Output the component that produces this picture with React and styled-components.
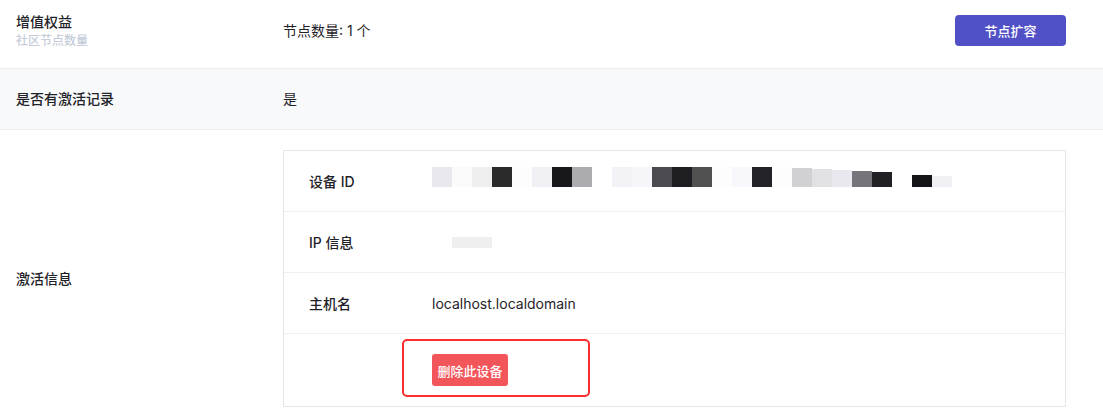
import React from "react";
import styled, { createGlobalStyle } from "styled-components";

const GlobalStyle = createGlobalStyle`
  body {
    margin: 0;
    background: #ffffff;
    font-family: "Inter", "Noto Sans CJK SC", sans-serif;
    color: #1f2329;
  }
`;

const Page = styled.div`
  width: 1103px;
  height: 413px;
  overflow: hidden;
  background: #ffffff;
`;

const Row = styled.div`
  display: grid;
  grid-template-columns: 267px 1fr;
  align-items: center;
  padding: ${(props) => props.pad || "0"};
  padding-left: 16px;
  padding-right: 37px;
  min-height: ${(props) => props.height}px;
  box-sizing: border-box;
  background: ${(props) => (props.shaded ? "#f8f9fa" : "#ffffff")};
  border-bottom: 1px solid #ebedf0;
`;

const LabelBox = styled.div`
  display: flex;
  flex-direction: column;
  gap: 1px;
`;

const Label = styled.div`
  font-size: 14px;
  font-weight: 500;
  line-height: 20px;
  color: #1f2329;
`;

const SubLabel = styled.div`
  font-size: 12px;
  font-weight: 500;
  line-height: 16px;
  color: #c3ccd8;
`;

const ValueLine = styled.div`
  display: flex;
  align-items: center;
  justify-content: space-between;
  font-size: 14px;
  line-height: 20px;
  color: #1f2329;
`;

const PrimaryButton = styled.button`
  width: 111px;
  height: 31px;
  border: none;
  border-radius: 4px;
  background: #5150c6;
  color: #ffffff;
  font-family: inherit;
  font-size: 13px;
  font-weight: 500;
  white-space: nowrap;
  cursor: pointer;
`;

const InnerTable = styled.div`
  border: 1px solid #e4e5e9;
  display: flex;
  flex-direction: column;
`;

const InnerRow = styled.div`
  display: grid;
  grid-template-columns: 123px 1fr;
  align-items: center;
  height: ${(props) => props.height}px;
  padding-left: 25px;
  box-sizing: border-box;
  border-bottom: ${(props) => (props.last ? "none" : "1px solid #eeeff2")};
  font-size: 14px;
  color: #1f2329;
`;

const InnerLabel = styled.div`
  font-weight: 500;
`;

const Mosaic = styled.div`
  display: flex;
  align-items: ${(props) => props.align || "flex-end"};
  height: 20px;
  margin-bottom: ${(props) => props.lift || 0}px;
`;

const Tile = styled.span`
  display: block;
  width: ${(props) => props.w || 20}px;
  height: ${(props) => props.h || 20}px;
  background: ${(props) => props.c};
`;

const Highlight = styled.div`
  width: 188px;
  height: 58px;
  box-sizing: border-box;
  margin-left: -30px;
  margin-top: -5px;
  border: 2px solid #ff2d2d;
  border-radius: 5px;
  padding: 5px 0 0 28px;
  display: flex;
  align-items: center;
`;

const DangerButton = styled.button`
  width: 76px;
  height: 32px;
  padding: 0;
  border: none;
  border-radius: 3px;
  background: #f2555a;
  color: #ffffff;
  font-family: inherit;
  font-size: 13px;
  font-weight: 500;
  white-space: nowrap;
  cursor: pointer;
`;

const deviceTiles = [
  "#e9e8ef", "#fbfbfb", "#efefef", "#2b2b2b", "#fdfdfd", "#f1f0f5",
  "#18171c", "#acabb0", "#ffffff", "#f3f2f7", "#f6f5fa", "#4b4a50",
  "#1e1d22", "#505050", "#fdfdfd", "#f8f7fc", "#232228", "#fdfdfd",
];

const tailTiles = [
  { c: "#d1d1d3", h: 19 },
  { c: "#e1e1e3", h: 18 },
  { c: "#e9e8ee", h: 17 },
  { c: "#75747a", h: 16 },
  { c: "#212025", h: 15 },
  { c: "#ffffff", h: 12 },
  { c: "#141318", h: 12 },
  { c: "#f0eff4", h: 11 },
];

export default function App() {
  return (
    <Page>
      <GlobalStyle />
      <Row height={69} pad="12px 0 19px">
        <LabelBox>
          <Label>增值权益</Label>
          <SubLabel>社区节点数量</SubLabel>
        </LabelBox>
        <ValueLine>
          <span>节点数量: 1 个</span>
          <PrimaryButton>节点扩容</PrimaryButton>
        </ValueLine>
      </Row>
      <Row height={61} shaded>
        <Label>是否有激活记录</Label>
        <ValueLine>是</ValueLine>
      </Row>
      <Row height={296} pad="20px 0">
        <Label>激活信息</Label>
        <InnerTable>
          <InnerRow height={61}>
            <InnerLabel>设备 ID</InnerLabel>
            <Mosaic lift={8}>
              {deviceTiles.map((c, i) => (
                <Tile key={i} c={c} />
              ))}
              {tailTiles.map((t, i) => (
                <Tile key={"t" + i} c={t.c} h={t.h} />
              ))}
            </Mosaic>
          </InnerRow>
          <InnerRow height={61}>
            <InnerLabel>IP 信息</InnerLabel>
            <Mosaic align="center">
              <Tile w={20} h={11} c="#ffffff" />
              <Tile w={40} h={11} c="#efefef" />
            </Mosaic>
          </InnerRow>
          <InnerRow height={61}>
            <InnerLabel>主机名</InnerLabel>
            <span>localhost.localdomain</span>
          </InnerRow>
          <InnerRow height={72} last>
            <span />
            <Highlight>
              <DangerButton>删除此设备</DangerButton>
            </Highlight>
          </InnerRow>
        </InnerTable>
      </Row>
    </Page>
  );
}
